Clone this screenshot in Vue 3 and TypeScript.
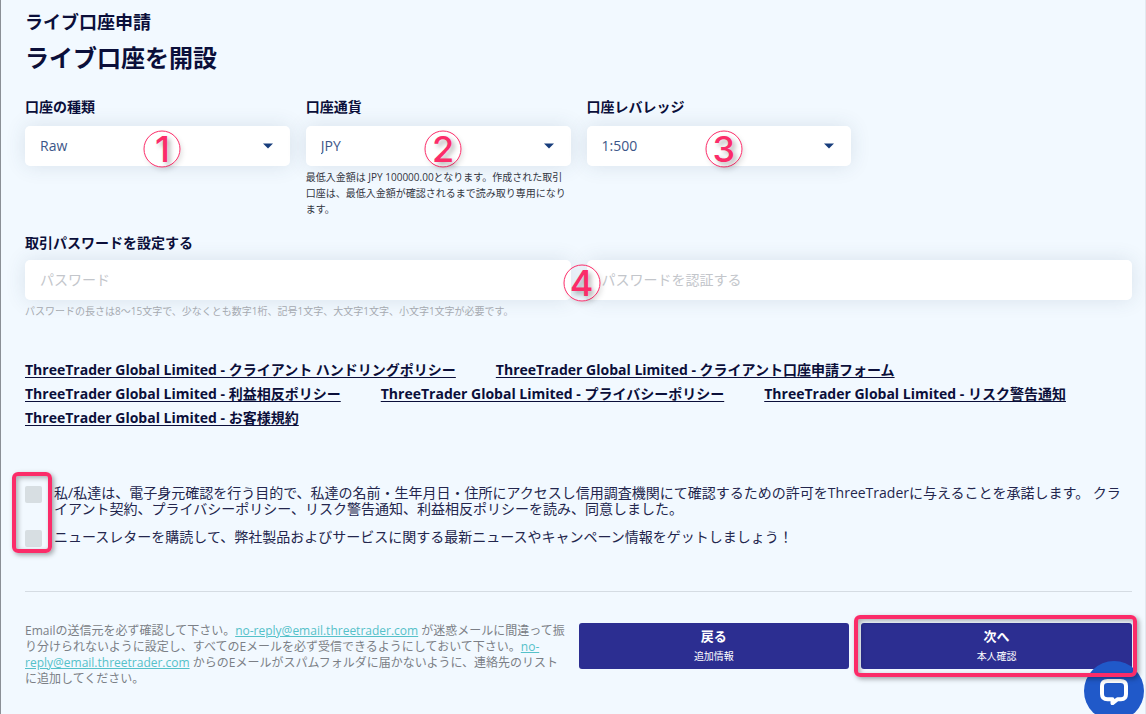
<script setup lang="ts">
import { ref } from 'vue'

interface SelectField {
  id: string
  label: string
  value: string
  marker: string
  help?: string
}

const fields: SelectField[] = [
  { id: 'type', label: '口座の種類', value: 'Raw', marker: '1' },
  {
    id: 'currency',
    label: '口座通貨',
    value: 'JPY',
    marker: '2',
    help: '最低入金額は JPY 100000.00となります。作成された取引口座は、最低入金額が確認されるまで読み取り専用になります。',
  },
  { id: 'leverage', label: '口座レバレッジ', value: '1:500', marker: '3' },
]

const company = 'ThreeTrader Global Limited'
const documents: string[] = [
  'クライアント ハンドリングポリシー',
  'クライアント口座申請フォーム',
  '利益相反ポリシー',
  'プライバシーポリシー',
  'リスク警告通知',
  'お客様規約',
]

const agree = ref(false)
const newsletter = ref(false)
const password = ref('')
const confirmation = ref('')
</script>

<template>
  <main class="page">
    <p class="eyebrow">ライブ口座申請</p>
    <h1 class="title">ライブ口座を開設</h1>

    <form @submit.prevent>
      <div class="fields">
        <div v-for="f in fields" :key="f.id" class="field">
          <label class="label" :for="f.id">{{ f.label }}</label>
          <div class="control">
            <select :id="f.id" class="box">
              <option>{{ f.value }}</option>
            </select>
            <svg class="caret" viewBox="0 0 10 6" aria-hidden="true"><path d="M0 0.5H10L5 5.5Z" /></svg>
            <span class="marker">{{ f.marker }}</span>
          </div>
          <p v-if="f.help" class="help">{{ f.help }}</p>
        </div>
      </div>

      <label class="label password-label" for="password">取引パスワードを設定する</label>
      <div class="passwords">
        <input id="password" v-model="password" class="box" type="password" placeholder="パスワード" />
        <input
          v-model="confirmation"
          class="box"
          type="password"
          placeholder="パスワードを認証する"
          aria-label="パスワードを認証する"
        />
        <span class="marker between">4</span>
      </div>
      <p class="help muted">パスワードの長さは8～15文字で、少なくとも数字1桁、記号1文字、大文字1文字、小文字1文字が必要です。</p>

      <nav class="documents">
        <a v-for="d in documents" :key="d" href="#">{{ company }} - {{ d }}</a>
      </nav>

      <div class="consents">
        <label class="consent">
          <input v-model="agree" type="checkbox" />
          <span>私/私達は、電子身元確認を行う目的で、私達の名前・生年月日・住所にアクセスし信用調査機関にて確認するための許可をThreeTraderに与えることを承諾します。 クライアント契約、プライバシーポリシー、リスク警告通知、利益相反ポリシーを読み、同意しました。</span>
        </label>
        <label class="consent">
          <input v-model="newsletter" type="checkbox" />
          <span>ニュースレターを購読して、弊社製品およびサービスに関する最新ニュースやキャンペーン情報をゲットしましょう！</span>
        </label>
        <span class="highlight checks"></span>
      </div>

      <footer class="footer">
        <p class="note">
          Emailの送信元を必ず確認して下さい。<a href="#">no-reply@email.threetrader.com</a> が迷惑メールに間違って振り分けられないように設定し、すべてのEメールを必ず受信できるようにしておいて下さい。<a href="#">no-reply@email.threetrader.com</a> からのEメールがスパムフォルダに届かないように、連絡先のリストに追加してください。
        </p>
        <div class="actions">
          <button class="action" type="button"><strong>戻る</strong><small>追加情報</small></button>
          <div class="next">
            <button class="action" type="submit"><strong>次へ</strong><small>本人確認</small></button>
            <span class="highlight around"></span>
          </div>
        </div>
      </footer>
    </form>

    <button class="chat" type="button" aria-label="チャット">
      <svg viewBox="0 0 28 28" aria-hidden="true">
        <path
          d="M7.5 4H20.5Q26 4 26 9V17Q26 22.3 21 22.3H17.5L12.5 26.3V22.3H7.5Q2 22.3 2 17V9Q2 4 7.5 4Z"
        />
      </svg>
    </button>
  </main>
</template>

<style>
body {
  margin: 0;
  background: #f2f9ff;
}
</style>

<style scoped>
.page {
  box-sizing: border-box;
  min-height: 100vh;
  padding: 10px 13px 24px 24px;
  border-left: 1px solid #8b9096;
  border-right: 1px solid #e2e8ef;
  background: #f2f9ff;
  color: #0b0f3a;
  font-family: "Open Sans", "Noto Sans CJK JP", sans-serif;
  font-size: 14px;
}
p,
h1 {
  margin: 0;
}
.eyebrow {
  font-size: 18px;
  line-height: 24px;
  font-weight: 700;
}
.title {
  margin-top: 8px;
  font-size: 24px;
  line-height: 32px;
  font-weight: 700;
}
.fields {
  display: grid;
  grid-template-columns: repeat(4, 1fr);
  gap: 16px;
  margin-top: 23px;
}
.label {
  display: block;
  line-height: 20px;
  font-weight: 700;
}
.control {
  position: relative;
  margin-top: 9px;
}
.box {
  box-sizing: border-box;
  display: block;
  width: 100%;
  height: 40px;
  padding: 0 15px 2px;
  border: 0;
  border-radius: 5px;
  background: #fff;
  box-shadow: 0 0 20px rgba(50, 70, 100, 0.13);
  color: #3c5688;
  font: inherit;
  appearance: none;
}
.box::placeholder {
  color: #c3c6cb;
  opacity: 1;
}
.caret {
  position: absolute;
  top: 17px;
  right: 17px;
  width: 10px;
  height: 6px;
  fill: #173d7c;
  pointer-events: none;
}
.marker {
  position: absolute;
  top: 23px;
  left: calc(50% + 5px);
  box-sizing: border-box;
  width: 37px;
  height: 37px;
  border: 1px solid #fb2c69;
  border-radius: 50%;
  color: #fb2c69;
  font: 500 36px/35px Inter, "Liberation Sans", sans-serif;
  text-align: center;
  text-shadow: 3px 3px 5px rgba(0, 0, 0, 0.3);
  box-shadow: 2px 3px 5px rgba(0, 0, 0, 0.1);
  transform: translate(-50%, -50%);
  pointer-events: none;
}
.marker.between {
  left: calc(50% + 3px);
}
.help {
  margin-top: 3px;
  color: #33363f;
  font-size: 10px;
  line-height: 16px;
}
.help.muted {
  color: #a9adb3;
}
.password-label {
  margin-top: 16px;
}
.passwords {
  position: relative;
  display: grid;
  grid-template-columns: 1fr 1fr;
  gap: 16px;
  margin-top: 7px;
}
.documents {
  display: flex;
  flex-wrap: wrap;
  column-gap: 40px;
  margin-top: 39px;
  line-height: 24px;
  font-weight: 700;
}
.documents a {
  color: inherit;
  text-underline-offset: 2px;
}
.consents {
  position: relative;
  display: grid;
  gap: 12px;
  margin-top: 55px;
  padding-bottom: 44px;
  border-bottom: 1px solid #d5dce3;
  color: #23264d;
  line-height: 16px;
}
.consent {
  display: flex;
  align-items: flex-start;
  gap: 12px;
}
.consent input {
  flex: none;
  width: 17px;
  height: 17px;
  margin: 1px 0 0;
  border-radius: 2px;
  background: #d7dee2;
  appearance: none;
}
.consent input:checked {
  background: #2c2e91;
}
.highlight {
  position: absolute;
  border: 4px solid #fb2c69;
  border-radius: 6px;
  box-shadow: 2px 2px 5px rgba(0, 0, 0, 0.35), inset 2px 2px 5px rgba(0, 0, 0, 0.3);
  pointer-events: none;
}
.checks {
  top: -13px;
  left: -13px;
  width: 32px;
  height: 73px;
}
.footer {
  display: grid;
  grid-template-columns: 1fr 1fr;
  align-items: start;
  margin-top: 31px;
}
.note {
  padding-right: 12px;
  color: #7b7f86;
  font-size: 12px;
  line-height: 16px;
}
.note a {
  color: #55c1c9;
}
.actions {
  display: grid;
  grid-template-columns: 1fr 1fr;
  gap: 12px;
}
.next {
  position: relative;
}
.action {
  display: flex;
  flex-direction: column;
  align-items: center;
  justify-content: center;
  gap: 4px;
  width: 100%;
  height: 46px;
  padding: 0 0 2px;
  border: 0;
  border-radius: 3px;
  background: #2c2e91;
  color: #fff;
  font: inherit;
}
.action strong {
  font-size: 13px;
  line-height: 18px;
}
.action small {
  font-size: 10px;
  line-height: 14px;
}
.around {
  inset: -8px -5px -8px -7px;
  z-index: 2;
}
.chat {
  position: fixed;
  right: 2px;
  bottom: -7px;
  z-index: 1;
  display: grid;
  place-items: center;
  width: 60px;
  height: 60px;
  padding: 0;
  border: 0;
  border-radius: 50%;
  background: #2059c9;
}
.chat svg {
  width: 28px;
  height: 28px;
  fill: none;
  stroke: #fff;
  stroke-width: 4;
  stroke-linejoin: round;
}
</style>
